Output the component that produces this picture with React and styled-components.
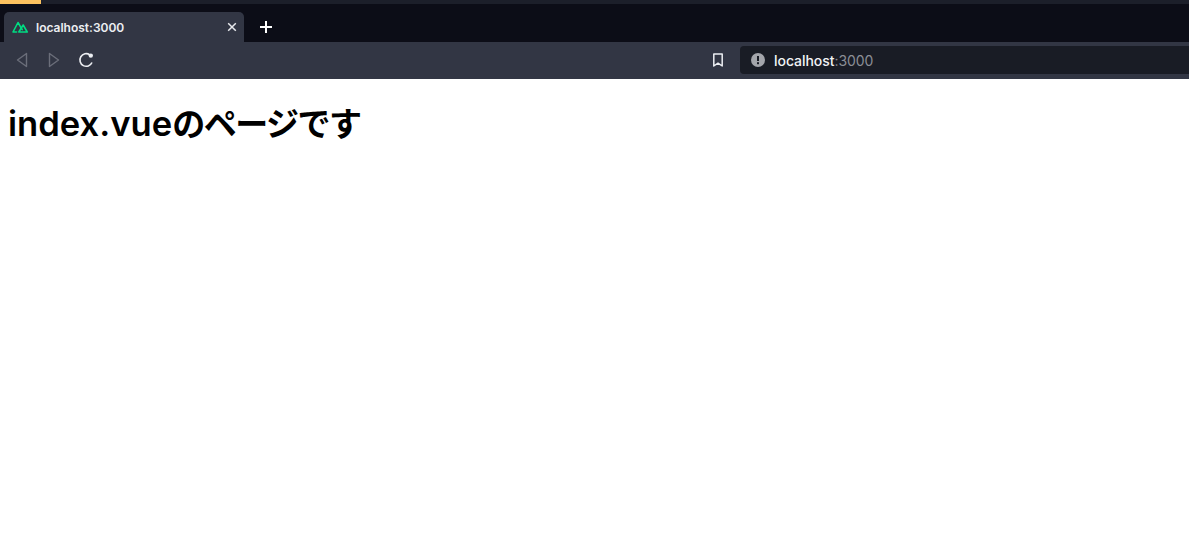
import React from "react";
import styled, { createGlobalStyle } from "styled-components";

const GlobalStyle = createGlobalStyle`
  html, body {
    margin: 0;
    padding: 0;
    background: #fff;
  }
`;

const Chrome = styled.div`
  font-family: Inter, "Liberation Sans", sans-serif;
  height: 79px;
  display: flex;
  flex-direction: column;
`;
const TopStrip = styled.div`
  height: 4px;
  background: #1c1f2a;
`;
const Progress = styled.div`
  width: 41px;
  height: 100%;
  background: #fcc25f;
`;
const TabBar = styled.div`
  height: 38px;
  background: #0c0d17;
  display: flex;
  align-items: flex-end;
  padding-left: 4px;
`;
const Tab = styled.div`
  width: 240px;
  height: 30px;
  box-sizing: border-box;
  background: #323644;
  border-radius: 5px 5px 0 0;
  display: flex;
  align-items: center;
  padding: 0 6px 0 8px;
  color: #fff;
`;
const TabTitle = styled.span`
  flex: 1;
  margin-left: 8px;
  font-size: 12px;
  font-weight: 600;
  color: #eceef2;
`;
const NewTab = styled.div`
  display: flex;
  align-self: center;
  margin-left: 15px;
  margin-top: 8px;
`;
const Toolbar = styled.div`
  height: 37px;
  box-sizing: border-box;
  padding: 0 0 1px 16px;
  background: #323644;
  display: flex;
  align-items: center;
`;
const NavButton = styled.div`
  display: flex;
  margin-right: ${(p) => p.$gap}px;
`;
const Spacer = styled.div`
  flex: 1;
`;
const Bookmark = styled.div`
  display: flex;
  margin-right: 16px;
`;
const UrlBar = styled.div`
  width: 449px;
  height: 28px;
  background: #191c25;
  border-radius: 4px 0 0 4px;
  display: flex;
  align-items: center;
  padding-left: 11px;
  box-sizing: border-box;
  font-size: 14px;
  letter-spacing: -0.05px;
`;
const Host = styled.span`
  margin-left: 9px;
  color: #f2f3f5;
  font-weight: 500;
`;
const Port = styled.span`
  color: #8b8e96;
  font-weight: 400;
`;
const Heading = styled.h1`
  margin: 24px 0 0 8px;
  font-family: Inter, "Noto Sans CJK JP", sans-serif;
  font-size: 34.6px;
  line-height: 41px;
  font-weight: 600;
  color: #000;
`;
const Kana = styled.span`
  font-size: 33px;
  font-weight: 700;
  letter-spacing: -1.5px;
`;

export default function App() {
  return (
    <>
      <GlobalStyle />
      <Chrome>
        <TopStrip>
          <Progress />
        </TopStrip>
        <TabBar>
          <Tab>
            <svg width="16" height="12" viewBox="0 0 16 12" fill="none" stroke="#00dc82" strokeWidth="1.6" strokeLinejoin="round" strokeLinecap="round">
              <path d="M4.600 11H1L6 1.500l4.200 7.200" />
              <path d="M6.800 11l4.400-7 4 7z" />
            </svg>
            <TabTitle>localhost:3000</TabTitle>
            <svg width="12" height="12" viewBox="0 0 12 12" stroke="#e8e9ed" strokeWidth="1.5">
              <path d="M2.200 2.200l7.600 7.600M9.800 2.200l-7.600 7.600" />
            </svg>
          </Tab>
          <NewTab>
            <svg width="14" height="14" viewBox="0 0 14 14" stroke="#fff" strokeWidth="2">
              <path d="M7 1v12M1 7h12" />
            </svg>
          </NewTab>
        </TabBar>
        <Toolbar>
          <NavButton $gap={20}>
            <svg width="12" height="16" viewBox="0 0 12 16" fill="none" stroke="#6b6e7a" strokeWidth="1.4" strokeLinejoin="round">
              <path d="M10.500 1.500v13L1.500 8z" />
            </svg>
          </NavButton>
          <NavButton $gap={18}>
            <svg width="12" height="16" viewBox="0 0 12 16" fill="none" stroke="#6b6e7a" strokeWidth="1.4" strokeLinejoin="round">
              <path d="M1.500 1.500v13l9-6.500z" />
            </svg>
          </NavButton>
          <NavButton $gap={0}>
            <svg width="16" height="16" viewBox="0 0 16 16" fill="none" stroke="#eceef2" strokeWidth="1.600">
              <path d="M14 10.500A6.300 6.300 0 1 1 11.800 2.800" />
              <circle cx="12.800" cy="3.600" r="2.200" fill="#eceef2" stroke="none" />
            </svg>
          </NavButton>
          <Spacer />
          <Bookmark>
            <svg width="12" height="14" viewBox="0 0 12 14" fill="none" stroke="#eceef2" strokeWidth="1.5" strokeLinejoin="round">
              <path d="M1.800 1h8.400v12L6 10.200 1.800 13z" />
            </svg>
          </Bookmark>
          <UrlBar>
            <svg width="14" height="14" viewBox="0 0 14 14">
              <circle cx="7" cy="7" r="7" fill="#a3a5ab" />
              <rect x="6" y="3" width="2" height="5" fill="#191c25" />
              <rect x="6" y="9.200" width="2" height="2" fill="#191c25" />
            </svg>
            <Host>
              localhost<Port>:3000</Port>
            </Host>
          </UrlBar>
        </Toolbar>
      </Chrome>
      <Heading>
        index.vue<Kana>のページです</Kana>
      </Heading>
    </>
  );
}
